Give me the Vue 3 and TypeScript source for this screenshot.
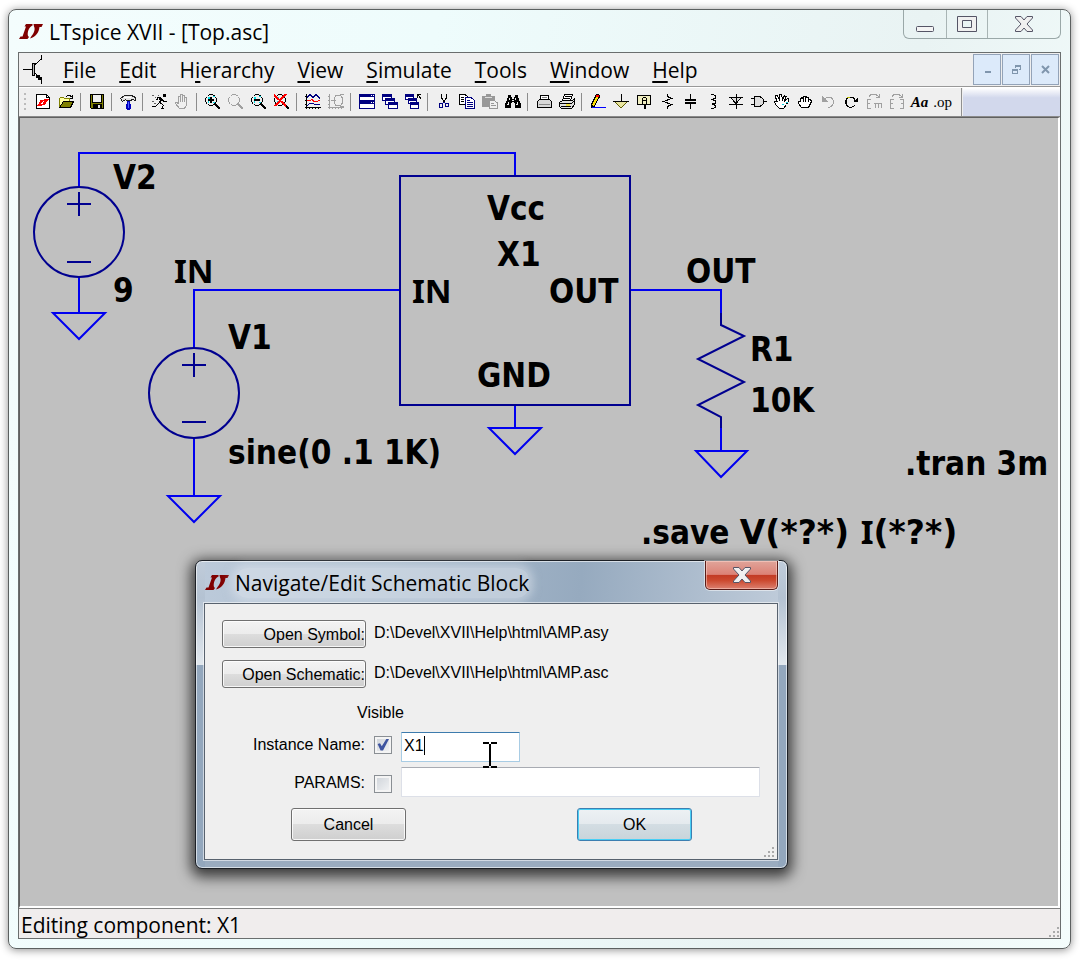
<script setup lang="ts">
import { ref } from 'vue'

interface Shape {
  d: string
  s?: string
  f?: string
  w?: number
}

interface Tool {
  name: string
  shapes?: Shape[]
  text?: string
  cls?: string
}

interface Label {
  x: number
  y: number
  parts: { t: string; cls?: string }[]
}

const K = '#000'
const G = '#a0a0a0'
const N = '#000080'
const R = '#f00'
const OL = '#808000'

const lens: Shape[] = [
  { d: 'M4 .5H8M2.5 1.5H4M8 1.5H9.5M1.5 2.5V4M.5 4V8M1.5 8V9.5M2.5 10.5H4M4 11.5H8M8 10.5H9.5M10.5 2.5V4M11.5 4V8M10.5 8V9.5', s: K },
  { d: 'M9.5 9.5L15 15', s: K, w: 2 },
]
const cyan: Shape = { d: 'M3 3H5V5H3ZM8 8H10V9H8ZM3 7H4V9H3ZM8 2H10V3H8Z', f: '#00e0e8' }

const groups: Tool[][] = [
  [
    { name: 'New schematic', shapes: [
      { d: 'M1.5 .5H11.5L14.5 3.5V14.5H1.5Z', s: K, f: '#fff' },
      { d: 'M11.5 .5V3.5H14.5', s: K },
      { d: 'M5 6H9L6 10H8L7 12H2L3 10H4ZM9 5H14L13 7H12L10 11H7L9 7H8Z', f: R },
    ] },
    { name: 'Open', shapes: [
      { d: 'M1.5 13.5V4.5L2.5 3.5H5.5L6.5 4.5H11.5V8', s: OL, f: '#ffffa0' },
      { d: 'M1.5 13.5L5.5 7.5H15.5L12.5 13.5Z', s: K, f: OL },
      { d: 'M8 2.5L9.5 1.5H12L14.5 3.5M14.5 1V4.5M12 4.5H15', s: K },
    ] },
  ],
  [
    { name: 'Save', shapes: [
      { d: 'M1.5 .5H14.5V14.5H2.5L1.5 13.5Z', s: K, f: OL },
      { d: 'M4 1H12V8H4Z', f: '#f0f0f0' },
      { d: 'M3.5 1V8.5H12.5V1M4 10H12V14H4Z', s: K, f: 'none' },
      { d: 'M4 10H12V14H4Z', f: K },
      { d: 'M9 11H11V14H9Z', f: '#e8e8e8' },
    ] },
  ],
  [
    { name: 'Control panel', shapes: [
      { d: 'M.5 4.5L4.5 1.5H11.5L15.5 3.5V6.5L12.5 5.5L10.5 6.5H6.5L5.5 5.5L2.5 7.5Z', s: '#202020', f: '#e4e4e4' },
      { d: 'M4 3H11V4H4Z', f: '#fff' },
      { d: 'M7 7H10V16H7Z', f: '#0000c0' },
      { d: 'M6 10H11V15H6Z', f: '#0000c0' },
      { d: 'M8 8H9V14H8Z', f: '#5060ff' },
    ] },
  ],
  [
    { name: 'Run', shapes: [
      { d: 'M12 0H15V3H12Z', f: K },
      { d: 'M8 4H11V7H10V9H8V7H9V6H8Z', f: K },
      { d: 'M10 3.5H6.5V5.5H5M11 5.5L13 7.5H15.5M8.5 8.5L6.5 10.5L4.5 12.5H1M9 9.5H10.5L12.5 11.5L10.5 14.5H13', s: K },
      { d: 'M1 1.5H3M4 3.5H5M1 7.5H3M3 9.5H5M7 1.5H8', s: '#606060' },
    ] },
    { name: 'Halt', shapes: [
      { d: 'M4.5 10V3.5C4.5 1.5 6.5 1.5 6.5 3.5V8V1.5C6.5 0 8.5 0 8.5 1.5V8V2C8.5 1 10.5 1 10.5 2.5V8V4C10.5 3 12.5 3 12.5 4V11L10.5 14.5H5.5L1.5 9.5C1.5 8 3 8 4.5 10', s: G },
    ] },
  ],
  [
    { name: 'Zoom area', shapes: [cyan, ...lens, { d: 'M3 6H9M6 3V9', s: K, w: 2 }] },
    { name: 'Pan', shapes: lens.map((x) => ({ ...x, s: G })) },
    { name: 'Zoom back', shapes: [cyan, ...lens, { d: 'M3 6H9', s: K, w: 2 }] },
    { name: 'Zoom full extents', shapes: [cyan, ...lens, { d: 'M0 1L12 12M12 0L1 12', s: R, w: 2 }] },
  ],
  [
    { name: 'Autorange', shapes: [
      { d: 'M1.5 0V15M0 13.5H16M0 2.5H2M0 6.5H2M0 10.5H2M4.5 13V15M7.5 13V15M10.5 13V15M13.5 13V15', s: K },
      { d: 'M2 3.5L5 .5L8 3.5L11 .5L15 4.5', s: N },
      { d: 'M2 6.5H5L7 5.5L9 7.5H12L15 6', s: R },
      { d: 'M2 11.5L5 9.5H8L10 10.5H15', s: N },
    ] },
    { name: 'Plot settings', shapes: [
      { d: 'M1.5 0V15M0 13.5H16M0 2.5H2M0 6.5H2M0 10.5H2M4.5 13V15M7.5 13V15M10.5 13V15M13.5 13V15M8 1.5H12.5L14.5 4V9L12.5 11.5H8L6 9V4ZM3 6.5H8M12 .5H16M12 12H16', s: G },
    ] },
  ],
  [
    { name: 'Tile windows', shapes: [
      { d: 'M.5 .5H15.5V6.5H.5ZM.5 7.5H15.5V14.5H.5Z', s: N, f: '#fff' },
      { d: 'M0 0H16V3H0ZM0 7H16V10H0Z', f: N },
      { d: 'M12 1H13V2H12ZM14 1H15V2H14ZM12 8H13V9H12ZM14 8H15V9H14Z', f: '#fff' },
    ] },
    { name: 'Cascade windows', shapes: [
      { d: 'M.5 .5H9.5V6.5H.5Z', s: N, f: '#fff' }, { d: 'M0 0H10V3H0Z', f: N },
      { d: 'M3.5 4.5H12.5V10.5H3.5Z', s: N, f: '#fff' }, { d: 'M3 4H13V7H3Z', f: N },
      { d: 'M6.5 8.5H15.5V14.5H6.5Z', s: N, f: '#fff' }, { d: 'M6 8H16V11H6Z', f: N },
    ] },
    { name: 'Close all windows', shapes: [
      { d: 'M.5 .5H8.5V5.5H.5Z', s: N, f: '#fff' }, { d: 'M0 0H9V3H0Z', f: N },
      { d: 'M3.5 4.5H11.5V9.5H3.5Z', s: N, f: '#fff' }, { d: 'M3 4H12V7H3Z', f: N },
      { d: 'M5.5 8.5H13.5V14.5H5.5Z', s: N, f: '#fff' }, { d: 'M5 8H14V11H5Z', f: N },
      { d: 'M12.5 4V.5H16M12.5 .5L16 4.5', s: K },
    ] },
  ],
  [
    { name: 'Cut', shapes: [
      { d: 'M5.5 0V4L9 8.5M10.5 0V4L7 8.5', s: K },
      { d: 'M3.5 9.5H6.5V13.5H3.5ZM9.5 9.5H12.5V12.5H9.5ZM7 9L8 8L9 9', s: N },
    ] },
    { name: 'Copy', shapes: [
      { d: 'M.5 .5H6L9.5 3.5V10.5H.5Z', s: K, f: '#fff' },
      { d: 'M2 3.5H5M2 5.5H5M2 7.5H5', s: K },
      { d: 'M6.5 3.5H12L15.5 6.5V14.5H6.5Z', s: N, f: '#fff' },
      { d: 'M8 6.5H11M8 8.5H14M8 10.5H14M8 12.5H14', s: N },
    ] },
    { name: 'Paste', shapes: [
      { d: 'M0 2H4V0H9V2H13V13H0Z', f: '#989898' },
      { d: 'M3 3H10V4H3Z', f: '#ddd' },
      { d: 'M7.5 6.5H12L15.5 9V14.5H7.5Z', s: '#989898', f: '#f0f0f0' },
      { d: 'M9 9.5H12M9 11.5H14', s: '#989898' },
    ] },
    { name: 'Find', shapes: [
      { d: 'M3 1H6V3H7V5H9V3H10V1H13V4H14V7H15V9H16V14H10V9H9V8H7V9H6V14H0V9H1V7H2V4H3Z', f: K },
      { d: 'M4 4H5V6H4ZM3 8H4V11H2V10H3ZM10 4H11V6H10ZM12 8H13V11H11V10H12ZM7 6H9V7H7Z', f: '#eee' },
    ] },
  ],
  [
    { name: 'Print setup', shapes: [
      { d: 'M4.5 5V1.5H12.5V5', s: K, f: '#fff' },
      { d: 'M3.5 5.5H13.5L15.5 7.5V13.5H1.5V7.5Z', s: K, f: '#d8d8d8' },
      { d: 'M3 10.5H14M6 3.5H11', s: '#888' },
    ] },
    { name: 'Print', shapes: [
      { d: 'M3.5 6.5L5.5 .5H13.5L11.5 6.5Z', s: K, f: '#fff' },
      { d: 'M6 2.5H12M5 4.5H11', s: K },
      { d: 'M.5 8.5L3.5 6.5H13.5L15.5 4.5V10.5L12.5 14.5H2.5L.5 12.5Z', s: K, f: '#e0e0e0' },
      { d: 'M.5 9.5H12.5L15.5 7M2 12.5H12', s: K },
      { d: 'M7 10H11V12H7Z', f: '#f0e040' },
    ] },
  ],
  [
    { name: 'Draw wire', shapes: [
      { d: 'M1.5 13.5V10.5L6.5 .5H8.5L9.5 2.5L4.5 12Z', s: K, f: '#ffe000' },
      { d: 'M6 1H9V3H6Z', f: R },
      { d: 'M1 11H3V14H1Z', f: K },
      { d: 'M2 13.5H16', s: '#0000ff' },
    ] },
    { name: 'Place ground', shapes: [
      { d: 'M1.5 7.5H14.5L8 14Z', s: '#606000', f: '#e8e4a0' },
      { d: 'M8.5 0V7M0 7.5H16', s: K },
    ] },
    { name: 'Label net', shapes: [
      { d: 'M1.5 1.5H14.5V10.5H1.5Z', s: K, f: '#f0eec0' },
      { d: 'M8.5 11V15', s: K, w: 2 },
      { d: 'M6.5 9.5V4.5L7.5 3.5H9.5L10.5 4.5V9.5M6.5 6.5H10.5', s: K },
    ] },
    { name: 'Resistor', shapes: [{ d: 'M8.5 0V2.5L12.5 4.5L4.5 7.5L12.5 10.5L8.5 12.5V15', s: K }] },
    { name: 'Capacitor', shapes: [
      { d: 'M8.5 0V6M8.5 9V15', s: K }, { d: 'M3 6H14M3 9H14', s: K, w: 2 },
    ] },
    { name: 'Inductor', shapes: [{ d: 'M6 .5H8.5L10.5 2V4L7.5 5.5L10.5 7V9L7.5 10L10.5 11.5V13L8.5 14.5H6', s: K }] },
    { name: 'Diode', shapes: [
      { d: 'M2.5 3.5H13.5L8 9.5Z', s: K, f: '#ddd' }, { d: 'M8.5 0V15M1 3.5H15M1 10.5H15', s: K },
    ] },
    { name: 'Component', shapes: [
      { d: 'M3.5 2.5H9L12.5 5.5V9.5L9 12.5H3.5Z', s: K, f: '#ddd' },
      { d: 'M0 4.5H3M0 10.5H3M13 7.5H16', s: K },
    ] },
    { name: 'Move', shapes: [
      { d: 'M5.5 14.5L1.5 10.5L.5 7.5H3L1.5 3V1.5H3L5.5 6V.5H7.5L8.5 6L10.5 1.5L12 2.5L10.5 7L14 4.5L15 6L12.5 10.5L9.5 14.5Z', s: K, f: '#fff' },
      { d: 'M12 8H14V9H12ZM8 10H10V11H8Z', f: '#00d0e0' },
    ] },
    { name: 'Drag', shapes: [
      { d: 'M4.5 13.5L1.5 9.5V7.5H3.5V4.5L5.5 3.5L6.5 5.5V2.5H8.5V5L9.5 2.5L11.5 4V6L13.5 5.5L14.5 7.5L12.5 11.5L11.5 13.5Z', s: K, f: '#fff' },
      { d: 'M6.5 5V8M8.5 5V8M11.5 6V8', s: K },
    ] },
    { name: 'Undo', shapes: [
      { d: 'M3 7C6 1.5 14 2.5 13.5 8.5C13 12 10 13.5 8 13.5', s: G }, { d: 'M2 2V8H8Z', f: G },
    ] },
    { name: 'Redo', shapes: [
      { d: 'M12 6.5C10 1 2.5 2.5 2.5 8.5C3 13 8 15 12 11.5M3.5 6V10', s: K }, { d: 'M15 3V8H10Z', f: K },
      { d: 'M4 3H7V4H4Z', f: '#b8b800' },
    ] },
    { name: 'Rotate', shapes: [
      { d: 'M5 5.5H1.5V14.5H5M2 9.5H4M8 9.5H15.5V14M9.5 9V14M12.5 9V14', s: G },
      { d: 'M3 2.5L5 .5H10L13.5 3.5M13.5 0V3.5H10', s: G },
    ] },
    { name: 'Mirror', shapes: [
      { d: 'M5 5.5H1.5V14.5H5M2 9.5H4M11 5.5H14.5V14.5H11M14 9.5H12', s: G },
      { d: 'M3 2.5L5 .5H10L13.5 3.5M13.5 0V3.5H10', s: G },
    ] },
    { name: 'Text', text: 'Aa', cls: 'aa' },
    { name: 'SPICE directive', text: '.op', cls: 'op' },
  ],
]

const menus: [string, string, string][] = [
  ['', 'F', 'ile'],
  ['', 'E', 'dit'],
  ['H', 'i', 'erarchy'],
  ['', 'V', 'iew'],
  ['', 'S', 'imulate'],
  ['', 'T', 'ools'],
  ['', 'W', 'indow'],
  ['', 'H', 'elp'],
]

const label = (t: string, x: number, y: number, cls?: string): Label => ({ x, y, parts: [{ t, cls }] })

const labels: Label[] = [
  label('V2', 113, 189),
  label('9', 113, 302),
  label('IN', 174, 283, 'serifed'),
  label('V1', 228, 349),
  label('sine(0 .1 1K)', 228, 464),
  label('Vcc', 487, 220),
  label('X1', 497, 266),
  label('IN', 412, 303, 'serifed'),
  label('OUT', 549, 303),
  label('GND', 477, 387),
  label('OUT', 686, 283),
  label('R1', 750, 361),
  label('10K', 750, 412),
  label('.tran 3m', 905, 475),
  {
    x: 641,
    y: 544,
    parts: [
      { t: '.save ' },
      { t: 'V(*?*) ', cls: 'wide-face' },
      { t: 'I', cls: 'serifed' },
      { t: '(*?*)', cls: 'wide-face' },
    ],
  },
]

const instanceName = ref('X1')
const params = ref('')
const nameVisible = ref(true)
const paramsVisible = ref(false)
</script>

<template>
  <div class="window">
    <header class="titlebar">
      <svg class="logo" width="24" height="18" viewBox="0 0 24 18">
        <path d="M7 1H13L14 2C10 4 8 9 9 13L10 14L8.5 16H0L1.5 13.5H3.5L7 3.5H5.5ZM14.5 1H24L22.5 4H20.5C20 9 17 14 11 15.5L12.5 13C15 10.5 16.5 6 15 3.5Z" fill="#800000" />
      </svg>
      <h1>LTspice XVII - [Top.asc]</h1>
      <div class="caption-buttons">
        <button type="button" class="min" aria-label="Minimize">
          <svg width="20" height="20" viewBox="0 0 20 20"><rect x="1.5" y="12.5" width="17" height="5" rx="1" fill="#f4f4f4" stroke="#555566" /></svg>
        </button>
        <button type="button" class="max" aria-label="Maximize">
          <svg width="20" height="20" viewBox="0 0 20 20"><path d="M.5 2.5H19.5V17.5H.5ZM5.5 6.5V13.5H14.5V6.5Z" fill="#f0f0f0" stroke="#555566" fill-rule="evenodd" /></svg>
        </button>
        <button type="button" class="close" aria-label="Close">
          <svg width="20" height="18" viewBox="0 0 20 18"><path d="M1.5 1.5H7L10 5L13 1.5H18.5V3L13 9L18.5 15V16.5H13L10 13L7 16.5H1.5V15L7 9L1.5 3Z" fill="#f0f0f0" stroke="#555566" /></svg>
        </button>
      </div>
    </header>

    <div class="client">
      <nav class="menubar">
        <svg class="doc" width="20" height="29" viewBox="0 0 20 29" shape-rendering="crispEdges">
          <path d="M0 14.5H9M18.5 0V4L12 9.5M12 18L18.5 24.5V29" stroke="#000" fill="none" />
          <path d="M9.5 8.5H11.5V20.5H9.5Z" fill="#bbb" stroke="#000" />
          <path d="M13 20H17V22H19V25H15V23H13Z" fill="#000" />
        </svg>
        <button v-for="m in menus" :key="m[1] + m[2]" type="button" class="menu">{{ m[0] }}<u>{{ m[1] }}</u>{{ m[2] }}</button>
        <div class="mdi">
          <button type="button" aria-label="Minimize document"><svg width="9" height="9" viewBox="0 0 9 9"><path d="M2 6H8V8H2Z" fill="#8096ad" /></svg></button>
          <button type="button" aria-label="Restore document"><svg width="9" height="9" viewBox="0 0 9 9" shape-rendering="crispEdges"><path d="M3 0H9V5H7V4H8V2H4V3H3ZM0 4H6V9H0ZM1 6V8H5V6Z" fill="#8096ad" fill-rule="evenodd" /></svg></button>
          <button type="button" aria-label="Close document"><svg width="9" height="9" viewBox="0 0 9 9"><path d="M1 1L8 8M8 1L1 8" stroke="#8096ad" stroke-width="2" /></svg></button>
        </div>
      </nav>

      <div class="toolrow">
        <div class="toolbar" role="toolbar">
          <span class="grip"></span>
          <div v-for="(g, i) in groups" :key="i" class="group">
            <button v-for="t in g" :key="t.name" type="button" class="tool" :class="t.cls" :aria-label="t.name">
              <template v-if="t.text">{{ t.text }}</template>
              <svg v-else width="16" height="16" viewBox="0 0 16 16" shape-rendering="crispEdges">
                <path v-for="(p, j) in t.shapes" :key="j" :d="p.d" :stroke="p.s ?? 'none'" :fill="p.f ?? 'none'" :stroke-width="p.w ?? 1" />
              </svg>
            </button>
          </div>
        </div>
        <div class="tool-rest"></div>
      </div>

      <main class="canvas">
        <svg class="schematic" aria-label="Schematic">
          <g transform="translate(-20 -118)">
            <g class="wire">
              <path d="M79 187V153H515V176M79 278V313" />
              <path d="M53 313H105L79 339Z" />
              <path d="M194 348V290H400M194 438V496" />
              <path d="M168 496H220L194 522Z" />
              <path d="M515 405V428M489 428H541L515 454Z" />
              <path d="M630 290H721V318M721 425V451M696 451H747L721 477Z" />
            </g>
            <g class="part">
              <circle cx="79" cy="232" r="45" />
              <path d="M79 192V216M67 204H91M67 262H91" />
              <circle cx="194" cy="393" r="45" />
              <path d="M194 353V377M182 365H206M182 422H206" />
              <path d="M400 176H630V405H400Z" />
              <path d="M721 313V325L744 336L698 359L744 382L698 405L721 417V428" />
            </g>
            <text v-for="l in labels" :key="l.x + '-' + l.y" :x="l.x" :y="l.y"><tspan v-for="p in l.parts" :key="p.t" :class="p.cls">{{ p.t }}</tspan></text>
          </g>
        </svg>

        <form class="dialog" role="dialog" aria-labelledby="dlg-title" @submit.prevent>
          <div class="dlg-title">
            <svg class="logo" width="24" height="18" viewBox="0 0 24 18">
              <path d="M7 1H13L14 2C10 4 8 9 9 13L10 14L8.5 16H0L1.5 13.5H3.5L7 3.5H5.5ZM14.5 1H24L22.5 4H20.5C20 9 17 14 11 15.5L12.5 13C15 10.5 16.5 6 15 3.5Z" fill="#800000" />
            </svg>
            <h2 id="dlg-title">Navigate/Edit Schematic Block</h2>
            <button type="button" class="dlg-close" aria-label="Close dialog">
              <svg width="20" height="18" viewBox="0 0 20 18"><path d="M1.5 1.5H7L10 5L13 1.5H18.5V3L13 9L18.5 15V16.5H13L10 13L7 16.5H1.5V15L7 9L1.5 3Z" fill="#f0f0f0" stroke="#555566" /></svg>
            </button>
          </div>
          <div class="dlg-body">
            <div class="file-row">
              <button type="button" class="btn file-btn">Open Symbol:</button>
              <span>D:\Devel\XVII\Help\html\AMP.asy</span>
            </div>
            <div class="file-row">
              <button type="button" class="btn file-btn">Open Schematic:</button>
              <span>D:\Devel\XVII\Help\html\AMP.asc</span>
            </div>
            <div class="visible">Visible</div>
            <div class="field-row name-row">
              <label for="iname">Instance Name:</label>
              <input v-model="nameVisible" type="checkbox" aria-label="Instance name visible">
              <div class="name-box">
                <input id="iname" v-model="instanceName" type="text" class="text active">
                <span class="caret"></span>
                <svg class="ibeam" width="14" height="26" viewBox="0 0 14 26" shape-rendering="crispEdges">
                  <path d="M0 1H6M8 1H14M0 25H6M8 25H14M7 2V24" stroke="#000" stroke-width="2" />
                </svg>
              </div>
            </div>
            <div class="field-row params-row">
              <label for="params">PARAMS:</label>
              <input v-model="paramsVisible" type="checkbox" aria-label="PARAMS visible">
              <input id="params" v-model="params" type="text" class="text wide">
            </div>
            <div class="actions">
              <button type="button" class="btn">Cancel</button>
              <button type="submit" class="btn ok">OK</button>
            </div>
            <svg class="sizegrip" width="12" height="12" viewBox="0 0 12 12"><path d="M9 1h2v2h-2zM5 5h2v2h-2zM9 5h2v2h-2zM1 9h2v2h-2zM5 9h2v2h-2zM9 9h2v2h-2z" fill="#aaa" /></svg>
          </div>
        </form>
      </main>

      <footer class="status">
        <span>Editing component: X1</span>
        <svg class="sizegrip" width="12" height="12" viewBox="0 0 12 12"><path d="M9 1h2v2h-2zM5 5h2v2h-2zM9 5h2v2h-2zM1 9h2v2h-2zM5 9h2v2h-2zM9 9h2v2h-2z" fill="#aaa" /></svg>
      </footer>
    </div>
  </div>
</template>

<style>
body {
  background: #fff;
}
</style>

<style scoped>
* {
  box-sizing: border-box;
}

button {
  margin: 0;
  padding: 0;
  border: 0;
  background: none;
  color: #000;
  font: inherit;
}

.window {
  display: flex;
  flex-direction: column;
  min-height: calc(100vh - 20px);
  margin: 9px 9px 11px 8px;
  padding: 0 9px 9px;
  border: 1px solid #5c6060;
  border-radius: 8px;
  background: linear-gradient(100deg, #f4fdfd 0%, #eefcfc 35%, #e9f3f3 75%, #f4fdfc 100%);
  box-shadow: 0 1px 8px rgba(0, 0, 0, 0.45);
  font-family: "Open Sans", "Noto Sans", sans-serif;
  color: #000;
}

.titlebar {
  display: flex;
  align-items: flex-start;
  height: 42px;
}

.logo {
  flex: none;
  margin: 13px 6px 0 1px;
}

h1,
h2 {
  margin: 0;
  font-weight: 400;
  font-size: 21px;
  line-height: 30px;
  white-space: nowrap;
}

h1 {
  margin-top: 7px;
}

.caption-buttons {
  display: flex;
  height: 29px;
  margin-left: auto;
  border: 1px solid #9aa8a8;
  border-top: 0;
  border-radius: 0 0 6px 6px;
}

.caption-buttons button {
  display: flex;
  align-items: center;
  justify-content: center;
  width: 42px;
}

.caption-buttons button + button {
  width: 41px;
  border-left: 1px solid #a8b4b4;
}

.caption-buttons .close {
  width: 73px;
}

.client {
  display: flex;
  flex: 1;
  flex-direction: column;
  border: 1px solid #6a6e6e;
  background: #efefef;
}

.menubar {
  display: flex;
  align-items: center;
  gap: 23px;
  height: 34px;
  padding: 0 1px 0 4px;
  border-bottom: 1px solid #989898;
}

.doc {
  flex: none;
  margin-right: -3px;
}

.menu {
  font-size: 21px;
  line-height: 30px;
  white-space: nowrap;
}

u {
  text-underline-offset: 3px;
}

.mdi {
  display: flex;
  gap: 1px;
  margin-left: auto;
}

.mdi button {
  display: flex;
  align-items: center;
  justify-content: center;
  width: 28px;
  height: 31px;
  border: 1px solid #93a3b8;
  background: #dceafa;
}

.toolrow {
  display: flex;
  height: 30px;
  border-top: 1px solid #fff;
  border-bottom: 1px solid #8a8a8a;
}

.toolbar {
  display: flex;
  align-items: center;
  padding-right: 7px;
  border-right: 1px solid #909090;
}

.grip {
  width: 2px;
  height: 18px;
  margin: 0 5px;
  background: repeating-linear-gradient(#bbb 0 2px, transparent 2px 5px);
}

.group {
  display: flex;
  align-items: center;
}

.group + .group::before {
  content: "";
  width: 1px;
  height: 18px;
  margin: 0 4px 0 3px;
  background: #8c8c8c;
}

.tool {
  display: flex;
  align-items: center;
  justify-content: center;
  width: 23px;
  height: 22px;
}

.aa {
  font: italic bold 15px/20px "Liberation Serif", serif;
}

.op {
  font: 15px/18px "Liberation Serif", serif;
}

.tool-rest {
  flex: 1;
  margin-left: 1px;
  background: linear-gradient(#fff, #d2d8ec 35%, #d2d8ec);
}

.canvas {
  position: relative;
  display: flex;
  flex: 1;
  min-height: 752px;
  border: solid #fff;
  border-width: 1px 2px 2px 1px;
  border-top-color: #606060;
  border-left-color: #606060;
  background: #c0c0c0;
}

.schematic {
  flex: 1;
  overflow: hidden;
}

.wire,
.part {
  fill: none;
  stroke: #0000f0;
  stroke-width: 2;
}

.part {
  stroke: #000090;
}

.schematic text {
  font-family: "DejaVu Sans Condensed", "DejaVu Sans", sans-serif;
  font-weight: 700;
  font-size: 33px;
  white-space: pre;
}

.schematic .wide-face {
  font-family: "DejaVu Sans", sans-serif;
}

.schematic .serifed {
  font-family: "Noto Sans", "DejaVu Sans", sans-serif;
}

.status {
  display: flex;
  align-items: center;
  justify-content: space-between;
  height: 30px;
  padding-left: 2px;
  border-top: 1px solid #808080;
  background: #f0eded;
  font-size: 21px;
  line-height: 28px;
}

.status span {
  padding-top: 2px;
}

.status .sizegrip {
  align-self: flex-end;
}

.dialog {
  position: absolute;
  top: 442px;
  left: 175px;
  display: flex;
  flex-direction: column;
  width: 593px;
  padding: 0 9px 8px 8px;
  border: 1px solid #1c2026;
  border-radius: 7px;
  background:
    linear-gradient(#c0ccda, #b4c2d2 12%, #e2e8ee 34%, #93a7bd 34%, #93a7bd) left / 9px 100% no-repeat,
    linear-gradient(#c0ccda, #b4c2d2 12%, #e2e8ee 34%, #93a7bd 34%, #93a7bd) right / 9px 100% no-repeat,
    linear-gradient(95deg, #bccada 0%, #aebfd0 30%, #96aabf 65%, #c0ccda 100%) top / 100% 50px no-repeat,
    #9aacc0;
  box-shadow: inset 0 0 0 1px rgba(255, 255, 255, 0.6), 0 4px 14px 4px rgba(0, 0, 0, 0.7);
  font: 16px/18px "Liberation Sans", Arial, sans-serif;
}

.dlg-title {
  display: flex;
  align-items: flex-start;
  height: 42px;
}

.dlg-title .logo {
  margin: 13px 6px 0 1px;
}

h2 {
  margin-top: 7px;
  border-radius: 12px;
  background: rgba(225, 232, 240, 0.5);
  box-shadow: 0 0 8px 4px rgba(225, 232, 240, 0.5);
  font-family: "Open Sans", "Noto Sans", sans-serif;
}

.dlg-close {
  display: flex;
  align-items: center;
  justify-content: center;
  width: 73px;
  height: 29px;
  margin-left: auto;
  border: 1px solid #5a1c18;
  border-top: 0;
  border-radius: 0 0 5px 5px;
  background: linear-gradient(#e0a49a, #dc8276 48%, #c23a24 50%, #cc4a30 70%, #dc8070);
  box-shadow: inset 0 0 0 1px rgba(255, 220, 210, 0.5), 0 0 0 1px rgba(255, 255, 255, 0.5);
}

.dlg-body {
  position: relative;
  padding: 16px 17px 18px;
  border: 1px solid #58626e;
  background: #efefef;
  box-shadow: 0 0 0 1px rgba(255, 255, 255, 0.55);
}

.file-row {
  display: flex;
  gap: 8px;
  margin-bottom: 12px;
}

.file-row span {
  padding-top: 4px;
}

.btn {
  width: 115px;
  height: 33px;
  border: 1px solid #707070;
  border-radius: 3px;
  background: linear-gradient(#f3f3f3, #ececec 49%, #dddddd 50%, #cfcfcf);
  box-shadow: inset 0 0 0 1px rgba(255, 255, 255, 0.8);
}

.file-btn {
  width: 144px;
  height: 28px;
  padding-top: 2px;
  text-align: right;
}

.visible {
  margin: 16px 0 10px 135px;
}

.field-row {
  display: flex;
  align-items: center;
  margin-bottom: 5px;
}

.field-row label {
  width: 143px;
  text-align: right;
}

.name-row label {
  padding-bottom: 4px;
}

.params-row label {
  padding-top: 1px;
}

input[type="checkbox"] {
  appearance: none;
  width: 18px;
  height: 18px;
  margin: 0 9px;
  border: 1px solid #8a8f94;
  background: linear-gradient(135deg, #cdd2d8, #f4f5f6);
  box-shadow: inset 0 0 0 2px #f4f4f4;
}

.name-row input[type="checkbox"] {
  margin-bottom: 5px;
}

.params-row input[type="checkbox"] {
  margin-top: 4px;
}

input[type="checkbox"]:checked::after {
  content: "";
  display: block;
  width: 12px;
  height: 12px;
  margin: 2px;
  background: #3f55a0;
  clip-path: polygon(5% 45%, 25% 40%, 40% 65%, 80% 0, 100% 5%, 50% 100%, 30% 100%);
}

.name-box {
  position: relative;
}

.text {
  display: block;
  width: 119px;
  height: 30px;
  padding: 0 2px 2px;
  border: 1px solid #dde0e8;
  border-top-color: #a8abb2;
  border-radius: 1px;
  outline: 0;
  background: #fff;
  font: inherit;
}

.text.active {
  border-color: #a8cce4;
  border-top-color: #3d7bad;
}

.text.wide {
  width: 359px;
}

.caret {
  position: absolute;
  top: 4px;
  left: 23px;
  width: 1px;
  height: 19px;
  background: #000;
}

.ibeam {
  position: absolute;
  top: 10px;
  left: 82px;
}

.actions {
  display: flex;
  justify-content: space-between;
  margin-top: 11px;
  padding: 0 68px 0 69px;
}

.ok {
  border-color: #3c7fb1;
  background: linear-gradient(#edf1f4, #e4eaee 49%, #d3dde3 50%, #c8d4da);
  box-shadow: inset 0 0 0 1px #48cff5;
}

.dlg-body .sizegrip {
  position: absolute;
  right: 2px;
  bottom: 1px;
}
</style>
